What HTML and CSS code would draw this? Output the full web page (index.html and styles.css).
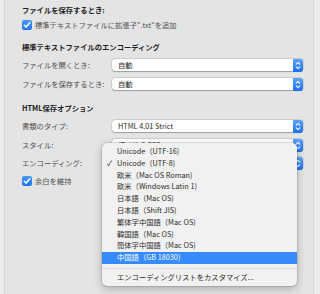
FILE: index.html
```html
<!DOCTYPE html>
<html lang="ja">
<head>
  <meta charset="UTF-8">
  <title>HTML保存オプション</title>
  <link rel="stylesheet" href="styles.css">
</head>
<body>
  <div class="edge-left"></div>

  <div class="main">
    <div class="title">ファイルを保存するとき:</div>
    <div class="check-row">
      <span class="checkbox"><svg width="10" height="10" viewBox="0 0 10 10"><path d="M2.3 5.2 L4.2 7.1 L7.8 2.8" fill="none" stroke="#fff" stroke-width="1.5" stroke-linecap="round" stroke-linejoin="round"/></svg></span>
      <span class="check-label">標準テキストファイルに拡張子".txt"を追加</span>
    </div>

    <div class="title gap-section">標準テキストファイルのエンコーディング</div>
    <div class="row first">
      <span class="label">ファイルを開くとき:</span>
      <div class="popup">自動<span class="stepper"></span></div>
    </div>
    <div class="row">
      <span class="label">ファイルを保存するとき:</span>
      <div class="popup">自動<span class="stepper"></span></div>
    </div>

    <div class="title gap-section2">HTML保存オプション</div>
    <div class="row first">
      <span class="label">書類のタイプ:</span>
      <div class="popup">HTML 4.01 Strict<span class="stepper"></span></div>
    </div>
    <div class="row">
      <span class="label">スタイル:</span>
      <div class="popup"><span class="clipped">埋め込みCSS</span><span class="stepper"></span></div>
    </div>
    <div class="row tight">
      <span class="label">エンコーディング:</span>
      <!-- value is hidden behind the open menu -->
      <div class="popup"><span class="stepper"></span></div>
    </div>
    <div class="check-row last">
      <span class="checkbox"><svg width="10" height="10" viewBox="0 0 10 10"><path d="M2.3 5.2 L4.2 7.1 L7.8 2.8" fill="none" stroke="#fff" stroke-width="1.5" stroke-linecap="round" stroke-linejoin="round"/></svg></span>
      <span class="check-label">余白を維持</span>
    </div>
  </div>

  <div class="edge-right"></div>

  <div class="menu">
    <div class="item">Unicode（UTF-16)</div>
    <div class="item checked">Unicode（UTF-8)</div>
    <div class="item">欧米（Mac OS Roman)</div>
    <div class="item">欧米（Windows Latin 1)</div>
    <div class="item">日本語（Mac OS)</div>
    <div class="item">日本語（Shift JIS)</div>
    <div class="item">繁体字中国語（Mac OS)</div>
    <div class="item">韓国語（Mac OS)</div>
    <div class="item">簡体字中国語（Mac OS)</div>
    <div class="item selected">中国語（GB 18030)</div>
    <div class="separator"></div>
    <div class="item">エンコーディングリストをカスタマイズ...</div>
  </div>
</body>
</html>
```

FILE: styles.css
```css
body {
  font-family: "Noto Sans CJK JP", "Noto Sans", sans-serif;
  font-size: 7.3px;
  margin: 0;
  padding: 0;
  width: 320px;
  height: 294px;
  overflow: hidden;
  background-color: #e4e4e4;
  color: #555;
  display: flex;
  position: relative;
}
.edge-left {
  width: 4px;
  background-color: #ececec;
  border-right: 1px solid #d8d8d8;
}
.edge-right {
  width: 6px;
  background-color: #ececec;
  border-left: 1px solid #d6d6d6;
}
.main {
  flex: 1;
  padding: 4px 0 0 17px;
  padding-right: 10px;
}
.title {
  height: 12px;
  line-height: 12px;
  font-weight: bold;
  color: #1e1e1e;
}
.gap-section {
  margin-top: 10px;
}
.gap-section2 {
  margin-top: 12px;
}
.check-row {
  display: flex;
  align-items: center;
  height: 12px;
  margin-top: 3px;
}
.check-row.last {
  margin-top: 6px;
}
.checkbox {
  width: 10px;
  height: 10px;
  border-radius: 2px;
  background: linear-gradient(#4a9afc, #1f74f4);
  margin-right: 3px;
  display: flex;
}
.check-label {
  color: #4f4f4f;
}
.row {
  display: flex;
  align-items: center;
  height: 12px;
  margin-top: 7px;
}
.row.first, .row.tight {
  margin-top: 6px;
}
.label {
  width: 90px;
  color: #4f4f4f;
}
.popup {
  flex: 1;
  height: 12px;
  line-height: 12px;
  background-color: #fff;
  border-radius: 3px;
  box-shadow: 0 0 0 0.5px rgba(0, 0, 0, 0.15), 0 0.5px 1px rgba(0, 0, 0, 0.25);
  padding-left: 6px;
  color: #2a2a2a;
  position: relative;
  display: flex;
}
/* only the top of this value shows above the open menu */
.clipped {
  height: 4px;
  overflow: hidden;
}
.stepper {
  margin-left: auto;
  width: 10px;
  height: 13px;
  margin-top: -0.5px;
  border-radius: 0 3px 3px 0;
  background:
    url("data:image/svg+xml;utf8,<svg xmlns='http://www.w3.org/2000/svg' width='10' height='13' viewBox='0 0 10 13'><path d='M3.2 5.2 L5 3.4 L6.8 5.2 M3.2 7.8 L5 9.6 L6.8 7.8' fill='none' stroke='white' stroke-width='1.1' stroke-linecap='round' stroke-linejoin='round'/></svg>") center no-repeat,
    linear-gradient(#5ca3fc, #1a6ff3);
}
.menu {
  position: absolute;
  left: 102px;
  top: 143px;
  width: 195px;
  padding: 3px 0 2px;
  background-color: #f1f1f1;
  border-radius: 5px;
  box-shadow: 0 0 0 0.5px rgba(0, 0, 0, 0.2), 0 3px 8px rgba(0, 0, 0, 0.25);
  color: #2a2a2a;
}
.item {
  height: 11.8px;
  line-height: 11.8px;
  padding-left: 15px;
  position: relative;
}
.checked::before {
  content: "✓";
  position: absolute;
  left: 5px;
}
.selected {
  background-color: #358bfb;
  color: #fff;
}
.separator {
  height: 1px;
  background-color: #dadada;
  margin: 4px 0 3px;
}
```
